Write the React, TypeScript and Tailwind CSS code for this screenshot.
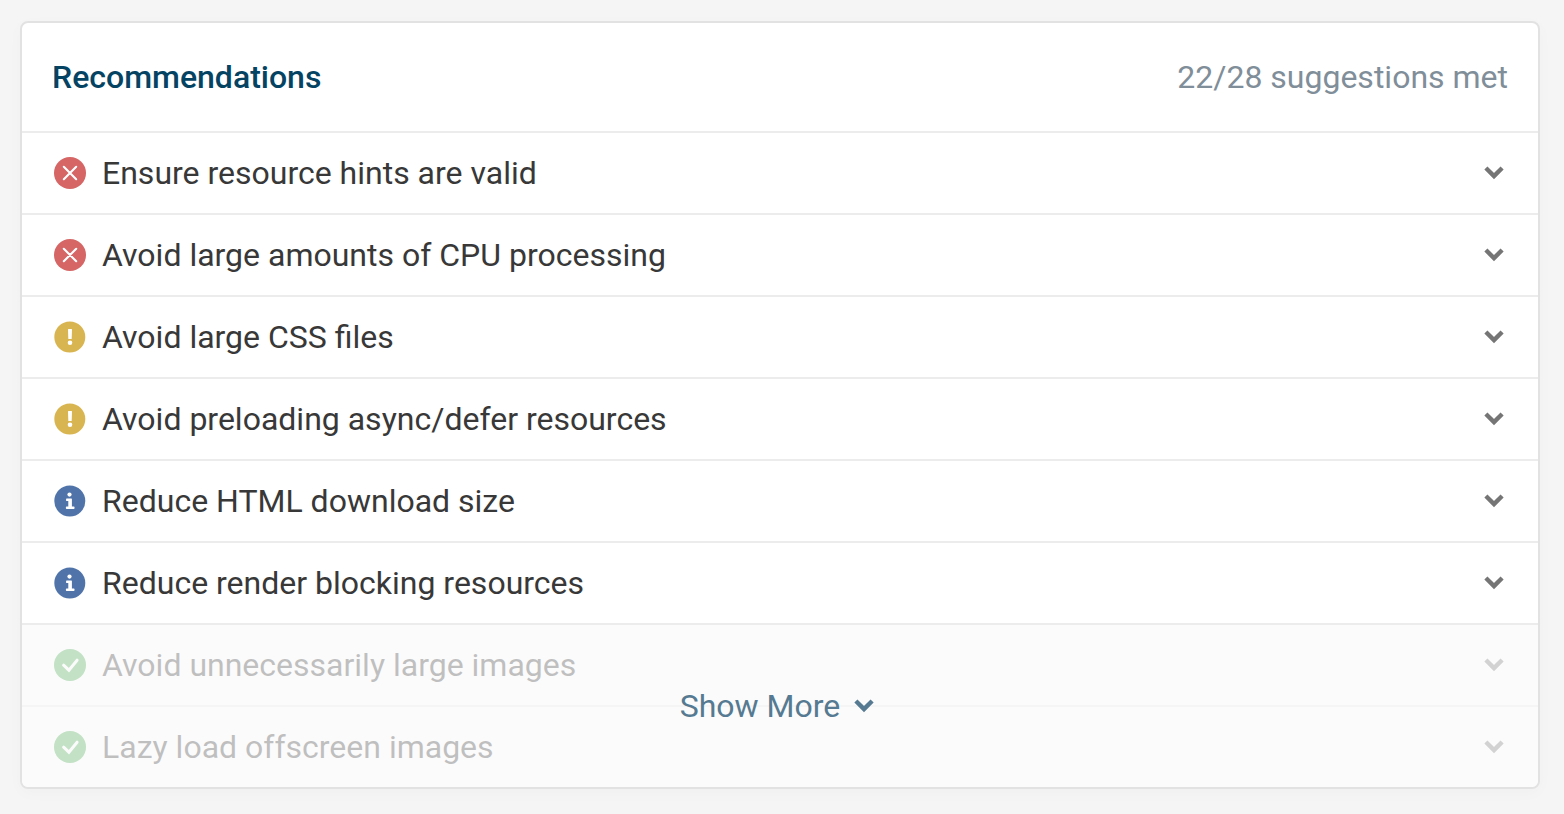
import React, { useState } from 'react';
import { clsx } from 'clsx';

type Status = 'error' | 'warning' | 'info' | 'passed';

interface Recommendation {
  title: string;
  status: Status;
}

const recommendations: Recommendation[] = [
  { title: 'Ensure resource hints are valid', status: 'error' },
  { title: 'Avoid large amounts of CPU processing', status: 'error' },
  { title: 'Avoid large CSS files', status: 'warning' },
  { title: 'Avoid preloading async/defer resources', status: 'warning' },
  { title: 'Reduce HTML download size', status: 'info' },
  { title: 'Reduce render blocking resources', status: 'info' },
];

const passedRecommendations: Recommendation[] = [
  { title: 'Avoid unnecessarily large images', status: 'passed' },
  { title: 'Lazy load offscreen images', status: 'passed' },
];

function StatusIcon({ status }: { status: Status }) {
  return (
    <svg viewBox="0 0 32 32" className="size-8 shrink-0" aria-hidden="true">
      {status === 'error' && (
        <>
          <circle cx="16" cy="16" r="16" fill="#d66565" />
          <path d="M9.8 9.8l12.4 12.4M22.2 9.8L9.8 22.2" stroke="#fff" strokeWidth="2.1" strokeLinecap="round" />
        </>
      )}
      {status === 'warning' && (
        <>
          <circle cx="15.8" cy="16" r="15.5" fill="#d9b551" />
          <path d="M14.6 8h2.8q.6 0 .6.6l-.3 8.8q0 .6-.6.6h-2.2q-.6 0-.6-.6L14 8.6q0-.6.6-.6z" fill="#fff" />
          <circle cx="16" cy="21.8" r="2.3" fill="#fff" />
        </>
      )}
      {status === 'info' && (
        <>
          <circle cx="15.8" cy="16" r="15.5" fill="#5074a9" />
          <circle cx="15.5" cy="9.6" r="2.1" fill="#fff" />
          <path
            d="M12.7 13.4h4.6q.6 0 .6.6v7.4h1.9q.7 0 .7.7v1.2q0 .7-.7.7h-7.2q-.7 0-.7-.7v-1.2q0-.7.7-.7h1.7v-5.3h-1.6q-.6 0-.6-.6V14q0-.6.6-.6z"
            fill="#fff"
          />
        </>
      )}
      {status === 'passed' && (
        <>
          <circle cx="16" cy="16" r="16" fill="#42a84a" />
          <path d="M9.6 16.2l5.3 5 8.2-10" fill="none" stroke="#fff" strokeWidth="3" strokeLinecap="round" />
        </>
      )}
    </svg>
  );
}

function Chevron({ className = '' }: { className?: string }) {
  return (
    <svg viewBox="0 0 20 14" className={clsx('h-3.5 w-5 shrink-0', className)} aria-hidden="true">
      <path d="M1.9 2L10 10.1 18.100 2" fill="none" stroke="currentColor" strokeWidth="4.4" />
    </svg>
  );
}

function RecommendationRow({ item }: { item: Recommendation }) {
  const [open, setOpen] = useState(false);

  return (
    <li className="border-t-2 border-[#ececec]">
      <button
        type="button"
        aria-expanded={open}
        onClick={() => setOpen(!open)}
        className="flex h-20 w-full items-center gap-4 pr-[34px] pl-8 text-left"
      >
        <StatusIcon status={item.status} />
        <span className="grow">{item.title}</span>
        <Chevron className={clsx('text-[#757575]', open && 'rotate-180')} />
      </button>
    </li>
  );
}

export default function App() {
  const [showAll, setShowAll] = useState(false);

  return (
    <div className="min-h-screen bg-[#f5f5f5] pt-[21px] pr-6 pb-6 pl-5 font-['Roboto',sans-serif] text-[32px] leading-10 text-[#383838]">
      <section className="overflow-hidden rounded-lg border-2 border-[#e2e2e2] bg-white shadow-[0_4px_16px_rgba(0,0,0,0.025)]">
        <header className="flex h-[108px] items-center justify-between px-[30px]">
          <h2 className="font-medium text-[#054363]">Recommendations</h2>
          <span className="text-[#7f8e99]">22/28 suggestions met</span>
        </header>

        <ul>
          {recommendations.map((item) => (
            <RecommendationRow key={item.title} item={item} />
          ))}
        </ul>

        <div className="relative">
          <ul>
            {passedRecommendations.map((item) => (
              <RecommendationRow key={item.title} item={item} />
            ))}
          </ul>

          {/* Fades the passed audits until the list is expanded */}
          {!showAll && (
            <button
              type="button"
              onClick={() => setShowAll(true)}
              className="absolute inset-x-0 top-0.5 bottom-0 flex items-center justify-center gap-3.5 bg-[#fafafa]/70 pr-1.5 text-[#557a91]"
            >
              Show More
              <Chevron />
            </button>
          )}
        </div>
      </section>
    </div>
  );
}
